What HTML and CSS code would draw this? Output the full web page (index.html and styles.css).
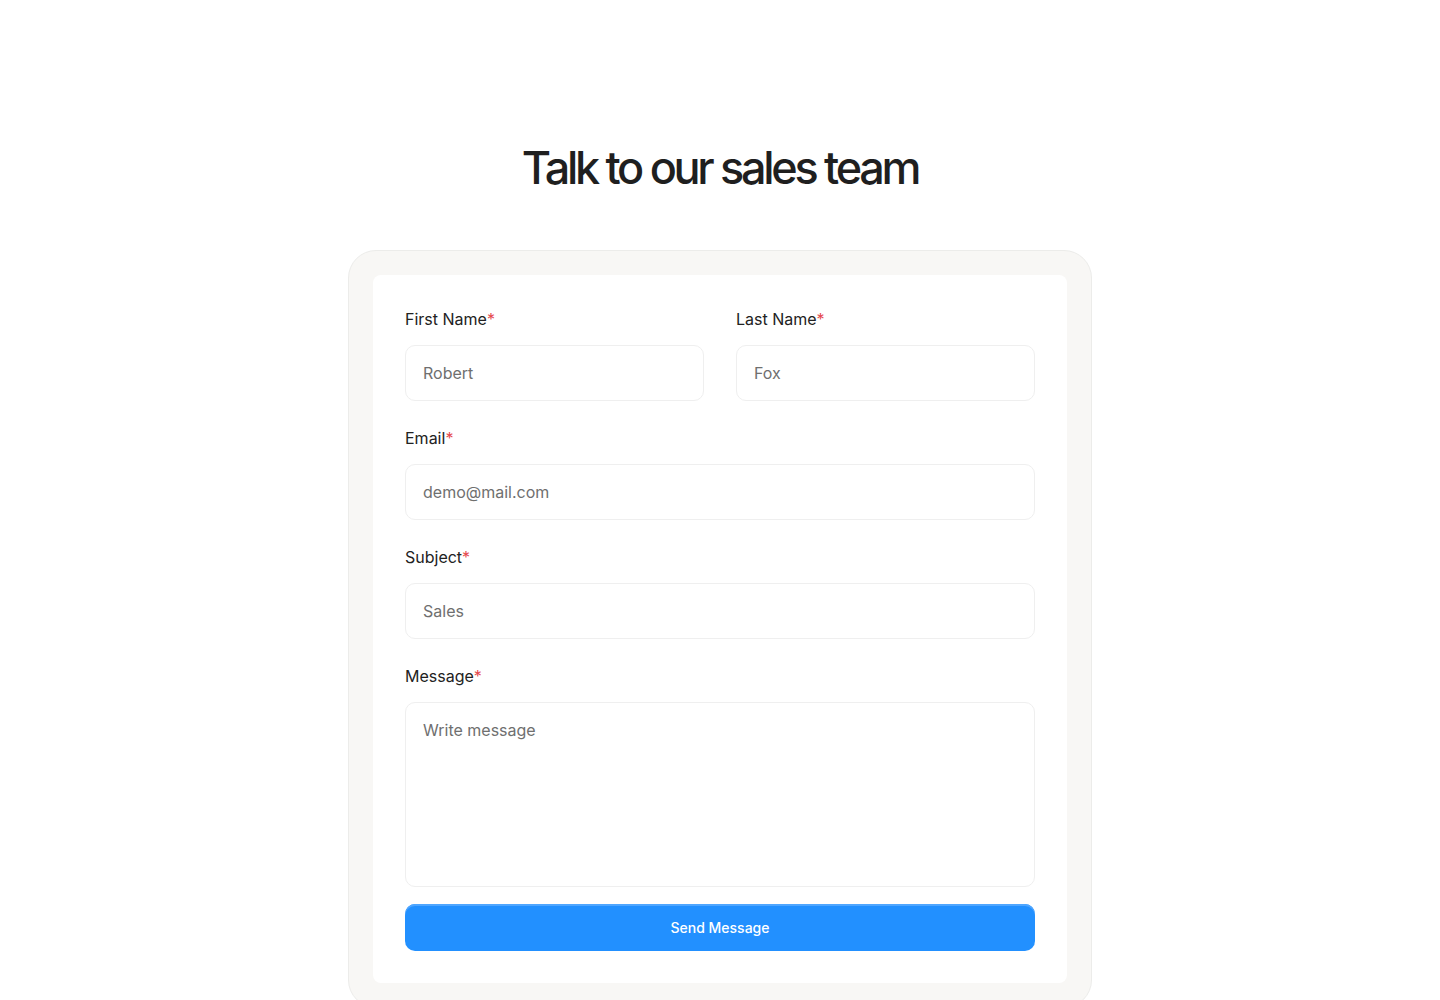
FILE: index.html
```html
<!DOCTYPE html>
<html lang="en">
<head>
  <meta charset="UTF-8">
  <title>Talk to our sales team</title>
  <link rel="stylesheet" href="styles.css">
</head>
<body>

  <h1>Talk to our sales team</h1>

  <div class="card">
    <form class="form" onsubmit="return false">
      <div class="row">
        <div class="field">
          <label for="first">First Name<span>*</span></label>
          <input id="first" type="text" placeholder="Robert">
        </div>
        <div class="field">
          <label for="last">Last Name<span>*</span></label>
          <input id="last" type="text" placeholder="Fox">
        </div>
      </div>

      <div class="field">
        <label for="email">Email<span>*</span></label>
        <input id="email" type="email" placeholder="demo@mail.com">
      </div>

      <div class="field">
        <label for="subject">Subject<span>*</span></label>
        <input id="subject" type="text" placeholder="Sales">
      </div>

      <div class="field">
        <label for="message">Message<span>*</span></label>
        <textarea id="message" placeholder="Write message"></textarea>
      </div>

      <button type="submit">Send Message</button>
    </form>
  </div>

</body>
</html>
```

FILE: styles.css
```css
* {
  box-sizing: border-box;
}

body {
  font-family: 'Inter', 'Noto Sans', sans-serif;
  margin: 0;
  padding: 140px 0 0;
  background: #ffffff;
  color: #222;
}

h1 {
  text-align: center;
  margin: 0 0 54px;
  font-size: 45px;
  line-height: 56px;
  font-weight: 500;
  letter-spacing: -3.3px;
  color: #1f1f1f;
}

.card {
  width: 744px;
  margin: 0 auto;
  padding: 24px;
  background: #f8f7f5;
  border: 1px solid #ececea;
  border-radius: 28px;
}

.form {
  background: #ffffff;
  border-radius: 8px;
  padding: 32px;
  display: flex;
  flex-direction: column;
  gap: 25px;
}

.row {
  display: grid;
  grid-template-columns: 1fr 1fr;
  gap: 32px;
}

.field {
  display: flex;
  flex-direction: column;
  gap: 14px;
}

.field label {
  font-size: 16px;
  line-height: 24px;
  color: #222;
}

.field label span {
  color: #e5484d;
}

.field input,
.field textarea {
  font-family: inherit;
  font-size: 16px;
  color: #222;
  height: 56px;
  padding: 0 17px;
  border: 1px solid #efefef;
  border-radius: 10px;
  background: #fff;
  outline: none;
}

.field textarea {
  height: 185px;
  padding: 15px 17px;
  line-height: 24px;
  resize: none;
}

.field input::placeholder,
.field textarea::placeholder {
  color: #6f6f6f;
}

.form button {
  margin-top: -8px;
  height: 47px;
  border: none;
  border-radius: 10px;
  background: #2290ff;
  box-shadow: inset 0 2px 0 #4fa6ff;
  color: #fff;
  font-family: inherit;
  font-size: 14px;
  font-weight: 500;
  cursor: pointer;
}
```
